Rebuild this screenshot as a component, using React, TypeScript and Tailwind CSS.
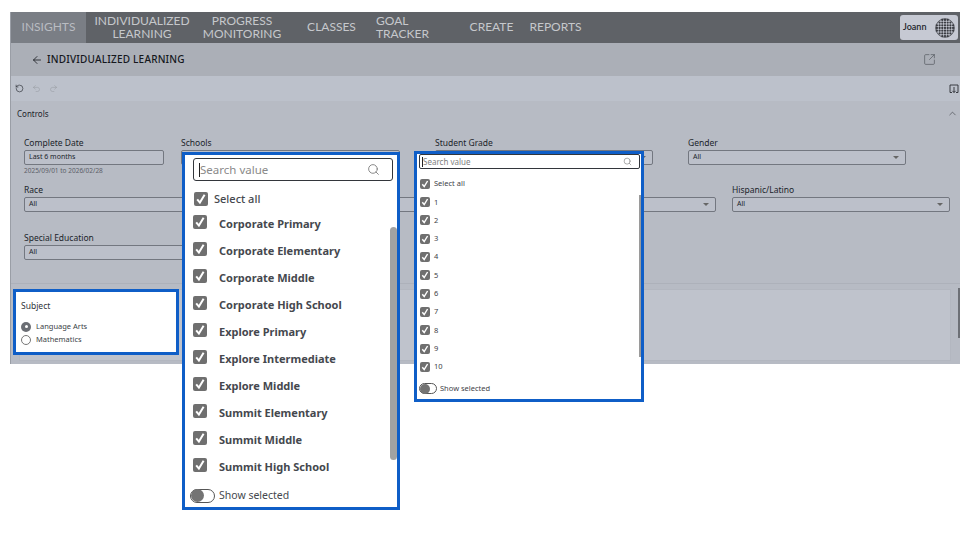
import { ArrowLeft, ChevronUp, ExternalLink, Redo2, RotateCcw, Search, SquareArrowOutUpRight, Undo2 } from "lucide-react";

const NAV_FONT = "font-['Lato','Noto_Sans',sans-serif]";
const schools = [
  "Corporate Primary",
  "Corporate Elementary",
  "Corporate Middle",
  "Corporate High School",
  "Explore Primary",
  "Explore Intermediate",
  "Explore Middle",
  "Summit Elementary",
  "Summit Middle",
  "Summit High School",
];
const grades = ["1", "2", "3", "4", "5", "6", "7", "8", "9", "10"];

function Check({ size }: { size: "sm" | "lg" }) {
  return (
    <span
      className={`flex shrink-0 items-center justify-center rounded-[2px] bg-[#6f6f6f] ${
        size === "lg" ? "h-[14px] w-[14px]" : "h-[10px] w-[10px]"
      }`}
    >
      <svg viewBox="0 0 14 14" className="h-full w-full" fill="none">
        <path d="M3.2 7.4 L5.9 10.6 L10.6 2.8" stroke="white" strokeWidth="2" />
      </svg>
    </span>
  );
}

function Toggle({ large }: { large?: boolean }) {
  return (
    <span
      className={`flex items-center rounded-full border border-[#555] bg-white ${
        large ? "h-[14px] w-[25px]" : "h-[11px] w-[18px]"
      }`}
    >
      <span className={`rounded-full bg-[#747474] ${large ? "h-[13px] w-[13px]" : "h-[10px] w-[10px]"}`} />
    </span>
  );
}

function Select({ label, width, value = "All" }: { label: string; width: string; value?: string }) {
  return (
    <div className={width}>
      <div className="mb-[1px] text-[8.5px] leading-[12px] text-[#20242b]">{label}</div>
      <div className="flex h-[15px] items-center justify-between rounded-[2px] border border-[#737780] bg-[#bcc0ca] pl-[4px] pr-[6px] text-[7px] text-[#20242b]">
        {value}
        <span className="h-0 w-0 border-x-[3px] border-t-[3px] border-x-transparent border-t-[#666]" />
      </div>
    </div>
  );
}

function Globe() {
  const dots = [];
  for (let r = 0; r < 7; r++) {
    for (let c = 0; c < 7; c++) {
      const dx = c - 3;
      const dy = r - 3;
      if (dx * dx + dy * dy < 12) {
        dots.push(<circle key={`${r}-${c}`} cx={10 + dx * 2.7} cy={10 + dy * 2.7} r="1.15" fill="#3a3c42" />);
      }
    }
  }
  return (
    <svg viewBox="0 0 20 20" className="h-[20px] w-[20px]">
      <circle cx="10" cy="10" r="9.3" fill="none" stroke="#3a3c42" strokeWidth="0.8" />
      {dots}
    </svg>
  );
}

export default function App() {
  return (
    <div className="relative h-[540px] w-[960px] overflow-hidden bg-white font-['Noto_Sans',sans-serif]">
      <div className="ml-[10px] mt-[12px] flex h-[352px] flex-col border-l border-[#9a9ea6]">
        {/* Top nav */}
        <div className={`flex h-[31px] items-stretch bg-[#5f6267] text-[12px] leading-[12.5px] text-[#c6c8cc] ${NAV_FONT}`}>
          <div className="flex w-[75px] items-center justify-center bg-[#7a7e85] text-[#b9bcc2]">INSIGHTS</div>
          <div className="flex w-[112px] items-center justify-center text-center">
            INDIVIDUALIZED
            <br />
            LEARNING
          </div>
          <div className="flex w-[88px] items-center justify-center text-center">
            PROGRESS
            <br />
            MONITORING
          </div>
          <div className="flex w-[90px] items-center justify-center pl-[1px]">CLASSES</div>
          <div className="flex w-[82px] items-center justify-center">GOAL TRACKER</div>
          <div className="flex w-[66px] items-center justify-center pl-[1px]">CREATE</div>
          <div className="flex w-[60px] items-center justify-center pl-[3px]">REPORTS</div>
          <div className="ml-auto mr-[2px] mt-[3px] flex h-[25px] w-[58px] items-center justify-between rounded-[3px] bg-[#c6c9d3] pl-[3px] pr-[3px] text-[9px] font-semibold text-[#22242a]">
            Joann
            <Globe />
          </div>
        </div>

        {/* Page header */}
        <div className="flex h-[33px] items-center justify-between bg-[#abafb7] pl-[20px] pr-[24px]">
          <div className="flex items-center gap-[4px] text-[10px] font-medium tracking-[0.2px] text-[#15181d]">
            <ArrowLeft size={12} strokeWidth={1.6} />
            INDIVIDUALIZED LEARNING
          </div>
          <SquareArrowOutUpRight size={13} strokeWidth={1.3} className="text-[#565a61]" />
        </div>

        {/* Toolbar */}
        <div className="flex h-[25px] items-center justify-between bg-[#bcc1cb] pl-[4px] pr-[1px]">
          <div className="flex items-center gap-[8px]">
            <RotateCcw size={9} strokeWidth={1.6} className="text-[#22252b]" />
            <Undo2 size={9} strokeWidth={1.2} className="text-[#8f939b]" />
            <Redo2 size={9} strokeWidth={1.2} className="text-[#8f939b]" />
          </div>
          <svg viewBox="0 0 10 10" className="h-[10px] w-[10px]" fill="none" stroke="#2b2e34" strokeWidth="0.9">
            <path d="M3 8.5 H1 V1 H9 V8.5 H7 M5 3 V8.5 M3.4 6.8 L5 8.5 L6.6 6.8" />
          </svg>
        </div>

        {/* Controls */}
        <div className="flex flex-1 flex-col bg-[#b7bbc4]">
          <div className="flex h-[25px] items-center justify-between pl-[6px] pr-[2px] text-[8px] text-[#20242b]">
            Controls
            <ChevronUp size={11} strokeWidth={1.2} className="text-[#2b2e34]" />
          </div>
          <div className="flex h-[157px] flex-col pl-[13px] pt-[11px]">
            <div className="flex h-[47px] gap-[17px]">
              <div className="w-[140px]">
                <div className="mb-[1px] text-[8.5px] leading-[12px] text-[#20242b]">Complete Date</div>
                <div className="flex h-[15px] items-center rounded-[2px] border border-[#737780] bg-[#bcc0ca] pl-[4px] text-[7px] text-[#20242b]">
                  Last 6 months
                </div>
                <div className="mt-[1px] text-[6.5px] leading-[10px] text-[#5c6068]">2025/09/01 to 2026/02/28</div>
              </div>
              <Select label="Schools" width="w-[219px]" />
              <Select label="Student Grade" width="w-[218px] ml-[18px]" />
              <Select label="Gender" width="w-[218px] ml-[18px]" />
            </div>
            <div className="flex h-[47px] gap-[18px]">
              <Select label="Race" width="w-[218px]" />
              <Select label="Ethnicity" width="w-[218px]" />
              <Select label="Language" width="w-[220px]" />
              <Select label="Hispanic/Latino" width="w-[218px] -ml-[2px]" />
            </div>
            <Select label="Special Education" width="w-[218px] mt-[1px]" />
          </div>

          {/* Bottom panel */}
          <div className="flex flex-1 border-t border-[#adb1ba] pb-[3px] pt-[5px]">
            <div className="ml-[8px] flex-1 border border-[#b3b7c0] bg-[#bfc3cc]" />
            <div className="ml-[7px] mt-[-1px] h-[50px] w-[2px] bg-[#6d7076]" />
          </div>
        </div>
      </div>

      {/* Subject callout */}
      <div className="absolute left-[13px] top-[289px] flex h-[66px] w-[166px] flex-col border-[3px] border-[#0f5ec7] bg-white pl-[5px] pt-[8px] text-[#3b3f46]">
        <div className="mb-[8px] text-[8.5px] leading-[12px] text-[#30343a]">Subject</div>
        <div className="flex h-[13px] items-center gap-[5px] text-[7.5px]">
          <span className="flex h-[10px] w-[10px] items-center justify-center rounded-full bg-[#6b6e74]">
            <span className="h-[3px] w-[3px] rounded-full bg-white" />
          </span>
          Language Arts
        </div>
        <div className="flex h-[13px] items-center gap-[5px] text-[7.5px]">
          <span className="h-[10px] w-[10px] rounded-full border border-[#777]" />
          Mathematics
        </div>
      </div>

      {/* Schools dropdown */}
      <div className="absolute left-[182px] top-[152px] flex h-[358px] w-[218px] flex-col border-[3px] border-[#0f5ec7] bg-white">
        <div className="ml-[8px] mt-[3px] flex h-[23px] w-[200px] items-center justify-between rounded-[3px] border border-[#33363b] pl-[5px] pr-[12px] text-[11.5px] text-[#8a8a8a]">
          <span className="border-l border-[#222] leading-[14px]">Search value</span>
          <Search size={13} strokeWidth={1.6} className="text-[#777]" />
        </div>
        <div className="ml-[9px] mt-[11px] flex h-[14px] items-center gap-[6px] text-[11px] font-medium text-[#45484e]">
          <Check size="lg" />
          Select all
        </div>
        <div className="relative mt-[7px] flex-1">
          {schools.map((s) => (
            <div key={s} className="flex h-[27px] items-start pl-[8px] pt-[2px]">
              <Check size="lg" />
              <span className="ml-[12px] mt-[1px] text-[11px] font-bold leading-[16px] text-[#45484e]">{s}</span>
            </div>
          ))}
          <div className="absolute right-[0px] top-[14px] h-[233px] w-[7px] rounded-full bg-[#a2a2a2]" />
        </div>
        <div className="mb-[4px] ml-[5px] flex h-[15px] items-center gap-[4px] text-[10.5px] text-[#45484e]">
          <Toggle large />
          Show selected
        </div>
      </div>

      {/* Student grade dropdown */}
      <div className="absolute left-[414px] top-[151px] flex h-[251px] w-[230px] flex-col border-[3px] border-[#0f5ec7] bg-white">
        <div className="ml-[2px] flex h-[15px] w-[221px] items-center justify-between rounded-[2px] border border-[#33363b] pl-[2px] pr-[7px] text-[8px] text-[#808080]">
          <span className="border-l border-[#222] leading-[10px]">Search value</span>
          <Search size={9} strokeWidth={1.6} className="text-[#777]" />
        </div>
        <div className="ml-[3px] mt-[6px] flex h-[18px] items-center gap-[4px] text-[7.5px] text-[#3e4147]">
          <Check size="sm" />
          Select all
        </div>
        <div className="relative flex-1">
          {grades.map((g) => (
            <div key={g} className="flex h-[18.3px] items-center gap-[4px] pl-[3px] text-[7.5px] text-[#3e4147]">
              <Check size="sm" />
              {g}
            </div>
          ))}
          <div className="absolute right-[0px] top-[2px] h-[162px] w-[2px] bg-[#9a9a9a]" />
        </div>
        <div className="mb-[5px] ml-[2px] flex h-[11px] items-center gap-[3px] text-[7.5px] text-[#3e4147]">
          <Toggle />
          Show selected
        </div>
      </div>
    </div>
  );
}
